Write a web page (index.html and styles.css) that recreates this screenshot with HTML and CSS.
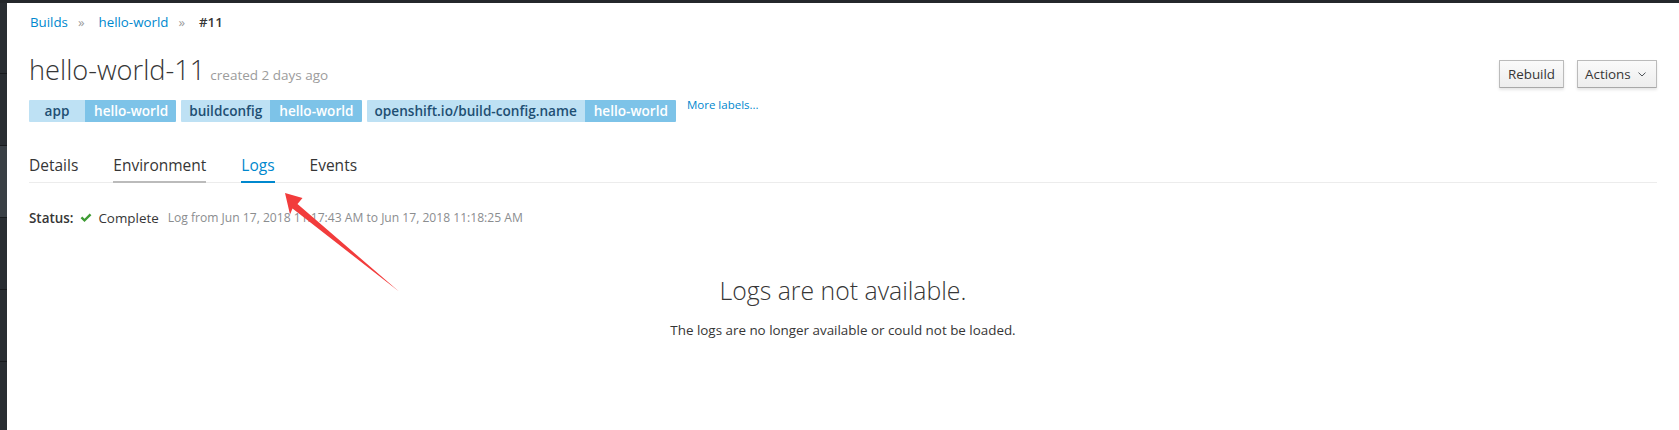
FILE: index.html
```html
<!DOCTYPE html>
<html lang="en">
<head>
<meta charset="utf-8">
<title>hello-world-11</title>
<link rel="stylesheet" href="styles.css">
</head>
<body>
<div class="topbar"></div>
<div class="shell">
  <nav class="sidebar">
    <div class="side-item"></div>
    <div class="side-item"></div>
    <div class="side-item active"></div>
    <div class="side-item"></div>
    <div class="side-item"></div>
    <div class="side-item"></div>
  </nav>
  <main class="content">
    <ol class="breadcrumb">
      <li><a href="#">Builds</a></li>
      <li class="sep">»</li>
      <li><a href="#">hello-world</a></li>
      <li class="sep">»</li>
      <li class="current">#11</li>
    </ol>

    <header class="page-header">
      <div class="header-main">
        <h1 class="title">hello-world-11 <small class="meta">created 2 days ago</small></h1>
        <div class="labels">
          <span class="label"><span class="key key-min">app</span><span class="val">hello-world</span></span>
          <span class="label"><span class="key">buildconfig</span><span class="val">hello-world</span></span>
          <span class="label"><span class="key">openshift.io/build-config.name</span><span class="val">hello-world</span></span>
          <a href="#" class="more">More labels...</a>
        </div>
      </div>
      <div class="actions">
        <button class="btn">Rebuild</button>
        <button class="btn">Actions <svg class="caret" width="8" height="5" viewBox="0 0 8 5"><path d="M0.5 0.6 L4 4 L7.5 0.6" fill="none" stroke="#4d5258" stroke-width="1"/></svg></button>
      </div>
    </header>

    <ul class="tabs">
      <li class="tab">Details</li>
      <li class="tab hover">Environment</li>
      <li class="tab active">Logs</li>
      <li class="tab">Events</li>
    </ul>

    <div class="status">
      <span class="status-label">Status:</span>
      <svg class="check" width="12" height="10" viewBox="0 0 12 10"><path d="M0.6 5.2 L2.3 3.5 L4.5 5.7 L9.7 0.5 L11.4 2.2 L4.5 9.1 Z" fill="#3f9c35"/></svg>
      <span class="status-value">Complete</span>
      <span class="log-range">Log from Jun 17, 2018 11:17:43 AM to Jun 17, 2018 11:18:25 AM</span>
    </div>

    <section class="blank">
      <h2 class="blank-title">Logs are not available.</h2>
      <p class="blank-text">The logs are no longer available or could not be loaded.</p>
    </section>
  </main>
</div>
<svg class="annotation" width="1679" height="430" viewBox="0 0 1679 430">
  <polygon points="285,193 302.5,198 297.5,204 399,291.5 292.5,208.5 290,214.5" fill="#f23c3c"/>
</svg>
</body>
</html>
```

FILE: styles.css
```css
* { box-sizing: border-box; }
html, body { margin: 0; padding: 0; background: #fff; }
body {
  font-family: "Open Sans", "Liberation Sans", sans-serif;
  color: #363636;
  font-size: 13.4px;
  width: 1679px;
  height: 430px;
  overflow: hidden;
  position: relative;
}
.topbar { height: 3px; background: #24272b; }
.shell { display: flex; height: 427px; }
.sidebar {
  width: 7px;
  flex: 0 0 7px;
  background: #292d32;
  display: flex;
  flex-direction: column;
}
.side-item {
  height: 72px;
  border-bottom: 1px solid #181a1d;
  flex: 0 0 72px;
}
.side-item:first-child { height: 71px; flex-basis: 71px; }
.side-item.active { background: #393f45; }
.content { flex: 1; padding: 0 22px; min-width: 0; }

.breadcrumb {
  list-style: none;
  margin: 0;
  padding: 10px 0 0 1px;
  display: flex;
  line-height: 18px;
  font-size: 13.3px;
}
.breadcrumb a { color: #0088ce; text-decoration: none; }
.breadcrumb .sep { color: #9c9c9c; padding: 0 14px 0 10px; }
.breadcrumb .current { color: #363636; font-weight: 600; }

.page-header { display: flex; justify-content: space-between; align-items: flex-start; }
.title {
  margin: 23px 0 0 0;
  font-weight: 300;
  font-size: 27.2px;
  line-height: 32px;
  color: #363636;
}
.meta { font-size: 13.5px; font-weight: 400; color: #9c9c9c; margin-left: -2px; }
.labels { display: flex; align-items: flex-start; margin-top: 9px; }
.label { display: flex; margin-right: 5px; font-size: 13.6px; font-weight: 600; line-height: 22px; border-radius: 1px; overflow: hidden; }
.key { background: #bee1f4; color: #1e4f73; padding: 0 8px; }
.key-min { min-width: 56px; text-align: center; }
.val { background: #7dc3e8; color: #fff; padding: 0 8px 0 9px; }
.more { color: #0088ce; font-size: 11.5px; text-decoration: none; margin-left: 6px; line-height: 14px; margin-top: -2px; }

.actions { display: flex; gap: 13px; margin-top: 29px; }
.btn {
  font-family: "Open Sans", "Liberation Sans", sans-serif;
  font-size: 13.4px;
  color: #363636;
  height: 28px;
  padding: 0 7px;
  border: 1px solid #bbb;
  border-bottom-color: #a8a8a8;
  border-radius: 1px;
  background: linear-gradient(to bottom, #fafafa 0%, #ededed 100%);
  box-shadow: 0 2px 3px rgba(3,3,3,0.1);
  display: flex;
  align-items: center;
  gap: 7px;
}
.btn:first-child { width: 65px; justify-content: center; }
.btn:last-child { width: 80px; padding-left: 7px; }
.caret { margin-top: 1px; }

.tabs {
  list-style: none;
  margin: 33px 0 0 0;
  padding: 0;
  display: flex;
  border-bottom: 1px solid #ececec;
}
.tab {
  font-size: 15.5px;
  line-height: 20px;
  padding: 0 0 6px 0;
  margin-right: 35px;
  border-bottom: 2px solid transparent;
  margin-bottom: -1px;
  color: #363636;
}
.tab.hover { border-bottom-color: #bbb; }
.tab.active { color: #0088ce; border-bottom-color: #0088ce; }

.status { display: flex; align-items: center; margin-top: 26px; line-height: 18px; }
.status-label { font-weight: 600; }
.check { margin: 0 6px 0 7px; }
.status-value { margin-right: 9px; }
.log-range { font-size: 12.1px; color: #8b8d8f; }

.blank { text-align: center; margin-top: 48px; }
.blank-title { margin: 0; font-weight: 300; font-size: 24.8px; line-height: 30px; color: #363636; }
.blank-text { margin: 16px 0 0 0; font-size: 13.4px; line-height: 18px; }

.annotation { position: absolute; left: 0; top: 0; pointer-events: none; }
```
